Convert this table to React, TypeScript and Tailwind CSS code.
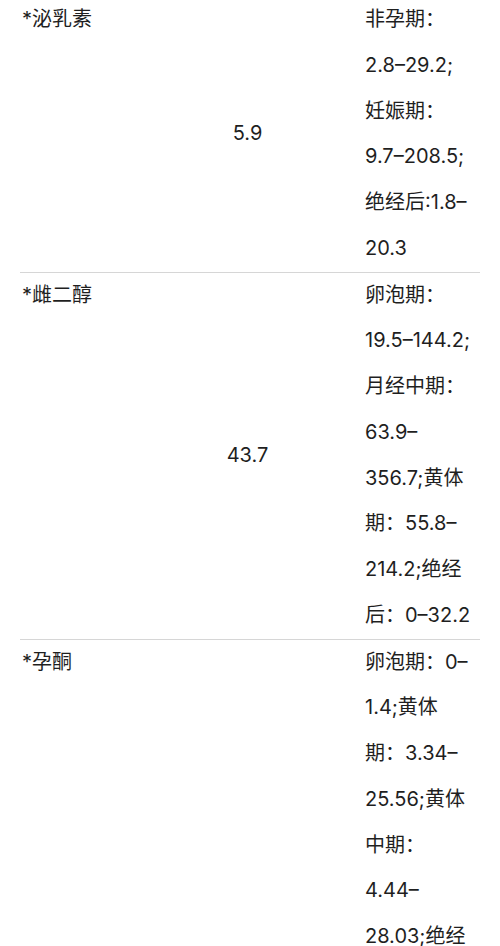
const rows = [
  {
    name: '*泌乳素',
    value: '5.9',
    range: ['非孕期：', '2.8–29.2;', '妊娠期：', '9.7–208.5;', '绝经后:1.8–', '20.3'],
  },
  {
    name: '*雌二醇',
    value: '43.7',
    range: ['卵泡期：', '19.5–144.2;', '月经中期：', '63.9–', '356.7;黄体', '期：55.8–', '214.2;绝经', '后：0–32.2'],
  },
  {
    name: '*孕酮',
    value: '',
    range: ['卵泡期：0–', '1.4;黄体', '期：3.34–', '25.56;黄体', '中期：', '4.44–', '28.03;绝经', '后：0–0.73'],
  },
];

export default function App() {
  return (
    <div
      className="bg-white text-[#1f1f1f] text-[20px] leading-[45.75px] h-[946px] overflow-hidden"
      style={{ fontFamily: 'Inter, "Noto Sans CJK SC", sans-serif' }}
    >
      <div className="mx-5 mt-[-3px]">
        {rows.map((row, i) => (
          <div
            key={row.name}
            className={'grid grid-cols-[110px_235px_115px] ' + (i < rows.length - 1 ? 'border-b border-[#d6d6d6]' : '')}
          >
            <div className="pl-[2px] whitespace-nowrap">{row.name}</div>
            <div className="flex items-center justify-center">{row.value}</div>
            <div className="whitespace-nowrap">
              {row.range.map((line, j) => (
                <div key={j}>{line}</div>
              ))}
            </div>
          </div>
        ))}
      </div>
    </div>
  );
}
